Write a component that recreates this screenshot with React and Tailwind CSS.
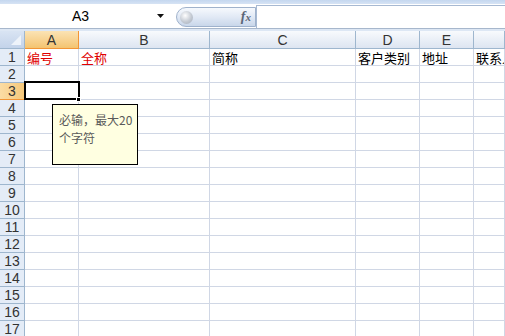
import React from "react";

const cols = ["A", "B", "C", "D", "E", ""];
const rowOne = [
  { t: "编号", red: true },
  { t: "全称", red: true },
  { t: "简称" },
  { t: "客户类别" },
  { t: "地址" },
  { t: "联系人" },
];
const rows = Array.from({ length: 17 }, (_, i) => i + 1);
const gridCols = "grid grid-cols-[25px_54px_131px_146px_64px_54px_1fr]";

export default function App() {
  return (
    <div className="relative w-[505px] h-[336px] overflow-hidden bg-white font-['Liberation_Sans','Noto_Sans_CJK_SC',sans-serif]">
      {/* formula bar */}
      <div className="h-[4px] bg-gradient-to-b from-[#c4d7ef] to-[#d6e3f4]" />
      <div className="flex h-[24px] bg-white">
        <div className="flex w-[176px] items-center">
          <div className="flex-1 text-center text-[14px] leading-none text-black pl-[4px]">A3</div>
          <svg width="9" height="5" viewBox="0 0 9 5" className="mr-[10px] mt-[1px]">
            <path d="M0 0 H7 L3.5 4 Z" fill="#111" />
          </svg>
        </div>
        <div className="mt-[3px] flex h-[20px] w-[80px] items-center rounded-l-full border border-[#9fb2cc] bg-gradient-to-b from-[#f6f9fd] via-[#e1e9f5] to-[#c9d7ea]">
          <div className="ml-[3px] h-[13px] w-[13px] rounded-full bg-[radial-gradient(circle_at_40%_35%,#ffffff,#c3c9d2_55%,#a3abb8)]" />
          <div className="flex-1" />
          <span className="mr-[4px] font-['Liberation_Serif',serif] text-[14px] italic font-bold leading-none text-[#5c6677]">
            f<span className="text-[11px]">x</span>
          </span>
        </div>
        <div className="mt-[1px] flex-1 border-l border-t border-[#a7b9d2] bg-white" />
      </div>
      <div className="h-[1px] bg-[#a7b7cc]" />
      <div className="h-[2px] bg-[#dde7f4]" />

      {/* column header */}
      <div className={`${gridCols} h-[18px]`}>
        <div className="relative border-r border-b border-[#9eb6ce] bg-gradient-to-b from-[#d9e4f3] to-[#c3d3ea]">
          <svg width="10" height="10" viewBox="0 0 10 10" className="absolute right-[3px] bottom-[3px]">
            <path d="M10 0 V10 H0 Z" fill="#eef3fa" />
          </svg>
        </div>
        {cols.map((c, i) => (
          <div
            key={i}
            className={
              i === 0
                ? "flex items-center justify-center border-r border-b border-[#f29536] bg-gradient-to-b from-[#fbe3b4] to-[#f4c470] text-[14px] leading-none text-[#333]"
                : "flex items-center justify-center border-r border-b border-[#9eb6ce] bg-gradient-to-b from-[#f8fafd] to-[#dde5f1] text-[14px] leading-none text-[#333]"
            }
          >
            {c}
          </div>
        ))}
      </div>

      {/* rows */}
      {rows.map((r) => (
        <div key={r} className={`${gridCols} h-[17px]`}>
          <div
            className={
              r === 3
                ? "flex items-center justify-center border-r border-b border-[#f29536] bg-gradient-to-r from-[#fbdca4] to-[#f5c87a] text-[14px] leading-none text-[#333]"
                : "flex items-center justify-center border-r border-b border-[#9eb6ce] bg-[#e4ecf7] text-[14px] leading-none text-[#333]"
            }
          >
            {r}
          </div>
          {cols.map((c, i) => (
            <div
              key={i}
              className="flex items-center overflow-hidden whitespace-nowrap border-r border-b border-[#d0d7e5] pl-[2px] text-[13px] leading-none"
            >
              {r === 1 && (
                <span
                  className={
                    rowOne[i].red
                      ? "font-['Noto_Sans_CJK_SC',sans-serif] text-[#e00000]"
                      : "font-['Noto_Sans_CJK_SC',sans-serif] text-black"
                  }
                >
                  {rowOne[i].t}
                </span>
              )}
            </div>
          ))}
        </div>
      ))}

      {/* selection */}
      <div className="absolute left-[24px] top-[81px] h-[19px] w-[56px] border-2 border-black" />
      <div className="absolute left-[76px] top-[97px] h-[5px] w-[5px] border border-white bg-black" />

      {/* input tooltip */}
      <div className="absolute left-[52px] top-[104px] h-[61px] w-[86px] border border-black bg-[#ffffe1] pl-[6px] pt-[6px] font-['Noto_Sans_CJK_SC',sans-serif] text-[12px] leading-[18px] text-[#5a5a5a] whitespace-nowrap">
        <div>必输，最大20</div>
        <div>个字符</div>
      </div>
    </div>
  );
}
